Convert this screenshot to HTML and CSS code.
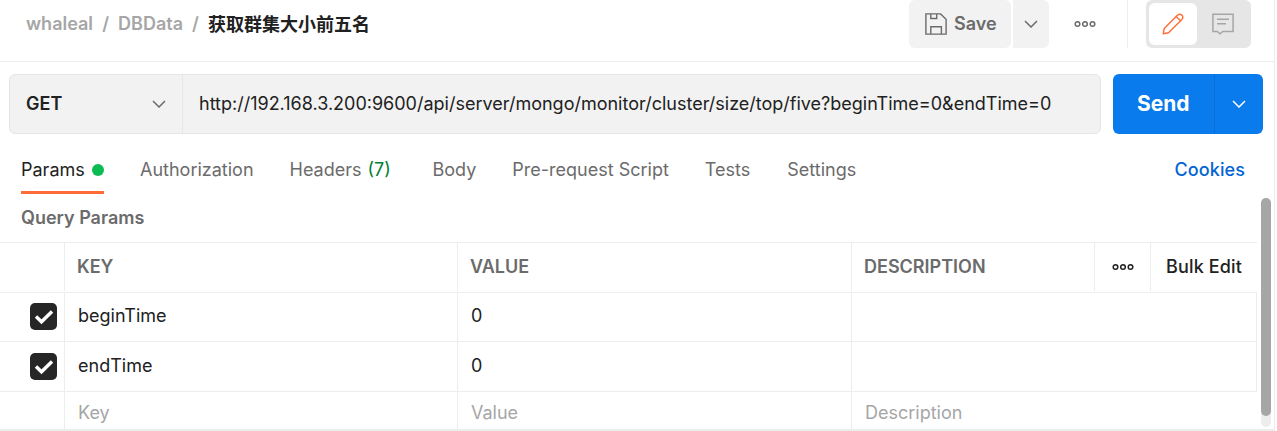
FILE: index.html
```html
<!DOCTYPE html>
<html lang="zh-CN">
<head>
<meta charset="utf-8">
<title>DBData</title>
<link rel="stylesheet" href="styles.css">
</head>
<body>
<div class="app">
  <header class="topbar">
    <nav class="crumbs">
      <span class="c-root">whaleal</span><span class="sep">/</span><span class="c-db">DBData</span><span class="sep">/</span><strong class="current">获取群集大小前五名</strong>
    </nav>
    <button class="save">
      <svg width="22" height="22" viewBox="0 0 22 22" fill="none" stroke="#6b6b6b" stroke-width="1.4"><path d="M.9 .9H15.6L21.1 6.2V21.1H.9Z"/><path d="M5.8 1V5.5H11.7V1M5.8 21V13.7H16.4V21"/></svg>
      <span>Save</span>
    </button>
    <button class="save-more"><svg width="14" height="8" viewBox="0 0 14 8" fill="none" stroke="#6b6b6b" stroke-width="1.5"><path d="M1 1L7 7L13 1"/></svg></button>
    <svg class="more" width="22" height="8" viewBox="0 0 22 8" fill="none" stroke="#6b6b6b" stroke-width="1.5"><circle cx="3.5" cy="4" r="2.3"/><circle cx="11" cy="4" r="2.3"/><circle cx="18.5" cy="4" r="2.3"/></svg>
    <div class="toggle">
      <div class="switch">
        <div class="edit"><svg width="22" height="22" viewBox="0 0 22 22" fill="none" stroke="#ff6c37" stroke-width="1.4" stroke-linejoin="round"><path d="M1.2 20.8L2.2 15.5L15.6 2.1Q17.7 .2 19.8 2.1Q21.8 4.2 19.9 6.4L6.5 19.7Z"/><path d="M14.2 3.5L18.5 7.8"/></svg></div>
        <svg class="comment" width="22" height="22" viewBox="0 0 22 22" fill="none" stroke="#a6a6a6" stroke-width="1.5"><path d="M.9 1.2H21.1V18.4H10.8L8 20.8L5.2 18.4H.9Z"/><path d="M5 6.2H17M5 10.8H14"/></svg>
      </div>
    </div>
  </header>
  <section class="request">
    <div class="urlbox">
      <div class="method"><span>GET</span><svg width="14" height="8" viewBox="0 0 14 8" fill="none" stroke="#6b6b6b" stroke-width="1.5"><path d="M1 1L7 7L13 1"/></svg></div>
      <div class="url"><span>http://192.168.3.200:9600/api/server/mongo/monitor/cluster/size/top/five?beginTime=0&amp;endTime=0</span></div>
    </div>
    <div class="send">
      <div class="send-label">Send</div>
      <div class="send-more"><svg width="14" height="8" viewBox="0 0 14 8" fill="none" stroke="#fff" stroke-width="1.5"><path d="M1 1L7 7L13 1"/></svg></div>
    </div>
  </section>
  <nav class="tabs">
    <span class="tab active">Params<i class="dot"></i></span>
    <span class="tab">Authorization</span>
    <span class="tab headers">Headers <b class="count">(7)</b></span>
    <span class="tab">Body</span>
    <span class="tab">Pre-request Script</span>
    <span class="tab">Tests</span>
    <span class="tab settings">Settings</span>
    <a class="cookies">Cookies</a>
  </nav>
  <main class="body">
    <div class="panel">
      <h2 class="title">Query Params</h2>
      <div class="row head">
        <div class="cell"></div>
        <div class="cell">KEY</div>
        <div class="cell">VALUE</div>
        <div class="cell">DESCRIPTION</div>
        <div class="cell opts"><svg width="22" height="8" viewBox="0 0 22 8" fill="none" stroke="#212121" stroke-width="1.5"><circle cx="3.5" cy="4" r="2.3"/><circle cx="11" cy="4" r="2.3"/><circle cx="18.5" cy="4" r="2.3"/></svg></div>
        <div class="cell bulk">Bulk Edit</div>
      </div>
      <div class="row first">
        <div class="cell check"><span class="box"><svg width="20" height="16" viewBox="0 0 20 16" fill="none" stroke="#fff" stroke-width="3.4"><path d="M2 7.5L7.5 12.8L18 2.5"/></svg></span></div>
        <div class="cell">beginTime</div>
        <div class="cell">0</div>
        <div class="cell last"></div>
      </div>
      <div class="row">
        <div class="cell check"><span class="box"><svg width="20" height="16" viewBox="0 0 20 16" fill="none" stroke="#fff" stroke-width="3.4"><path d="M2 7.5L7.5 12.8L18 2.5"/></svg></span></div>
        <div class="cell">endTime</div>
        <div class="cell">0</div>
        <div class="cell last"></div>
      </div>
      <div class="row blank">
        <div class="cell"></div>
        <div class="cell">Key</div>
        <div class="cell">Value</div>
        <div class="cell">Description</div>
      </div>
    </div>
    <div class="scroll"><div class="thumb"></div></div>
  </main>
</div>
</body>
</html>
```
FILE: styles.css
```css
* { box-sizing: border-box; }
body {
  margin: 0;
  overflow: hidden;
  background: #fff;
  color: #212121;
  font: 18px/24px Inter, "Noto Sans CJK SC", sans-serif;
}
svg { display: block; flex: none; }
button { border: 0; padding: 0; font: inherit; color: inherit; }
.app {
  width: 1275px;
  height: 431px;
  border-right: 1px solid #ededed;
  border-bottom: 2px solid #ededed;
  display: flex;
  flex-direction: column;
  overflow: hidden;
}
.topbar {
  height: 62px;
  flex: none;
  display: flex;
  border-bottom: 1px solid #ededed;
}
.crumbs {
  display: flex;
  height: 48px;
  width: 883px;
  margin-left: 26px;
  align-items: center;
  color: #a6a6a6;
  font-weight: 600;
  white-space: nowrap;
}
.sep { width: 25px; text-align: center; }
.current { color: #212121; font-weight: 700; padding-top: 1px; }
.save {
  width: 102px;
  height: 48px;
  border-radius: 6px;
  background: #f2f2f2;
  color: #6b6b6b;
  font-weight: 600;
  display: flex;
  align-items: center;
  gap: 7px;
  padding-left: 16px;
}
.save-more {
  width: 36px;
  height: 48px;
  margin-left: 2px;
  border-radius: 0 6px 6px 0;
  background: #f2f2f2;
  display: flex;
  align-items: center;
  justify-content: center;
}
.more { margin: 20px 0 0 25px; }
.toggle {
  margin-left: 31px;
  height: 48px;
  border-left: 1px solid #ededed;
  padding-left: 18px;
}
.switch {
  width: 105px;
  height: 48px;
  padding: 3px;
  border-radius: 6px;
  background: #e6e6e6;
  display: flex;
  align-items: center;
  gap: 15px;
}
.edit {
  width: 48px;
  height: 42px;
  border-radius: 6px;
  background: #fff;
  display: flex;
  align-items: center;
  justify-content: center;
}
.request {
  display: flex;
  flex: none;
  height: 60px;
  margin: 12px 0 0 9px;
  gap: 12px;
}
.urlbox {
  width: 1092px;
  border: 1px solid #e6e6e6;
  border-radius: 6px;
  background: #f2f2f2;
  display: flex;
}
.method {
  width: 173px;
  border-right: 1px solid #e6e6e6;
  padding: 0 16px;
  display: flex;
  align-items: center;
  justify-content: space-between;
  font-weight: 600;
}
.url {
  display: flex;
  align-items: center;
  padding-left: 16px;
  white-space: nowrap;
}
.send {
  width: 150px;
  border-radius: 6px;
  background: #097bed;
  display: flex;
  color: #fff;
}
.send-label {
  width: 102px;
  border-right: 1px solid #076fd6;
  line-height: 60px;
  padding-left: 24px;
  font-size: 21px;
  font-weight: 700;
}
.send-more { flex: 1; display: flex; align-items: center; justify-content: center; }
.tabs {
  flex: none;
  display: flex;
  height: 60px;
  padding: 12px 29px 0 21px;
  gap: 36px;
  color: #6b6b6b;
  white-space: nowrap;
}
.tab { line-height: 48px; height: 48px; }
.active {
  display: flex;
  align-items: center;
  width: 83px;
  border-bottom: 3px solid #ff6c37;
  color: #212121;
  line-height: 24px;
  padding-top: 2px;
  justify-content: space-between;
}
.headers { width: 107px; }
.settings { margin-left: 1px; }
.dot { width: 12px; height: 12px; border-radius: 50%; background: #0cbb52; }
.count { color: #007f31; font-weight: 400; margin-left: 1px; }
.cookies { margin-left: auto; line-height: 48px; color: #0265d2; font-weight: 500; letter-spacing: .1px; }
.body { flex: 1; display: flex; min-height: 0; }
.panel { width: 1257px; }
.title {
  margin: 0;
  height: 48px;
  padding: 12px 0 0 21px;
  font-size: 18px;
  line-height: 24px;
  font-weight: 600;
  color: #6b6b6b;
}
.row {
  display: grid;
  grid-template-columns: 64px 393px 394px 406px;
  height: 50px;
  border-top: 1px solid #ededed;
}
.row.first { height: 49px; }
.row.first .cell { line-height: 45px; }
.row.first .check { padding-bottom: 1px; }
.row.blank { height: 60px; color: #a6a6a6; }
.cell {
  border-left: 1px solid #ededed;
  padding-left: 13px;
  line-height: 47px;
  white-space: nowrap;
}
.cell:first-child { border-left: 0; }
.row.blank .cell { line-height: 41px; }
.row.head {
  grid-template-columns: 64px 393px 394px 243px 56px 107px;
  color: #6b6b6b;
  font-weight: 600;
}
.row.head .cell { padding-left: 12px; height: 48px; line-height: 48px; }
.row.head .opts { display: flex; align-items: center; padding-left: 17px; }
.row.head .bulk { padding-left: 15px; color: #212121; font-weight: 500; letter-spacing: .15px; }
.last { border-right: 1px solid #ededed; }
.check { display: flex; align-items: center; padding-left: 30px; }
.box {
  width: 27px;
  height: 27px;
  border-radius: 5px;
  background: #262626;
  display: flex;
  align-items: center;
  justify-content: center;
}
.scroll {
  width: 10px;
  height: 229px;
  margin: 4px 0 0 4px;
  border-radius: 5px;
  background: #ededed;
}
.thumb { height: 218px; border-radius: 5px; background: #a6a6a6; }
```
